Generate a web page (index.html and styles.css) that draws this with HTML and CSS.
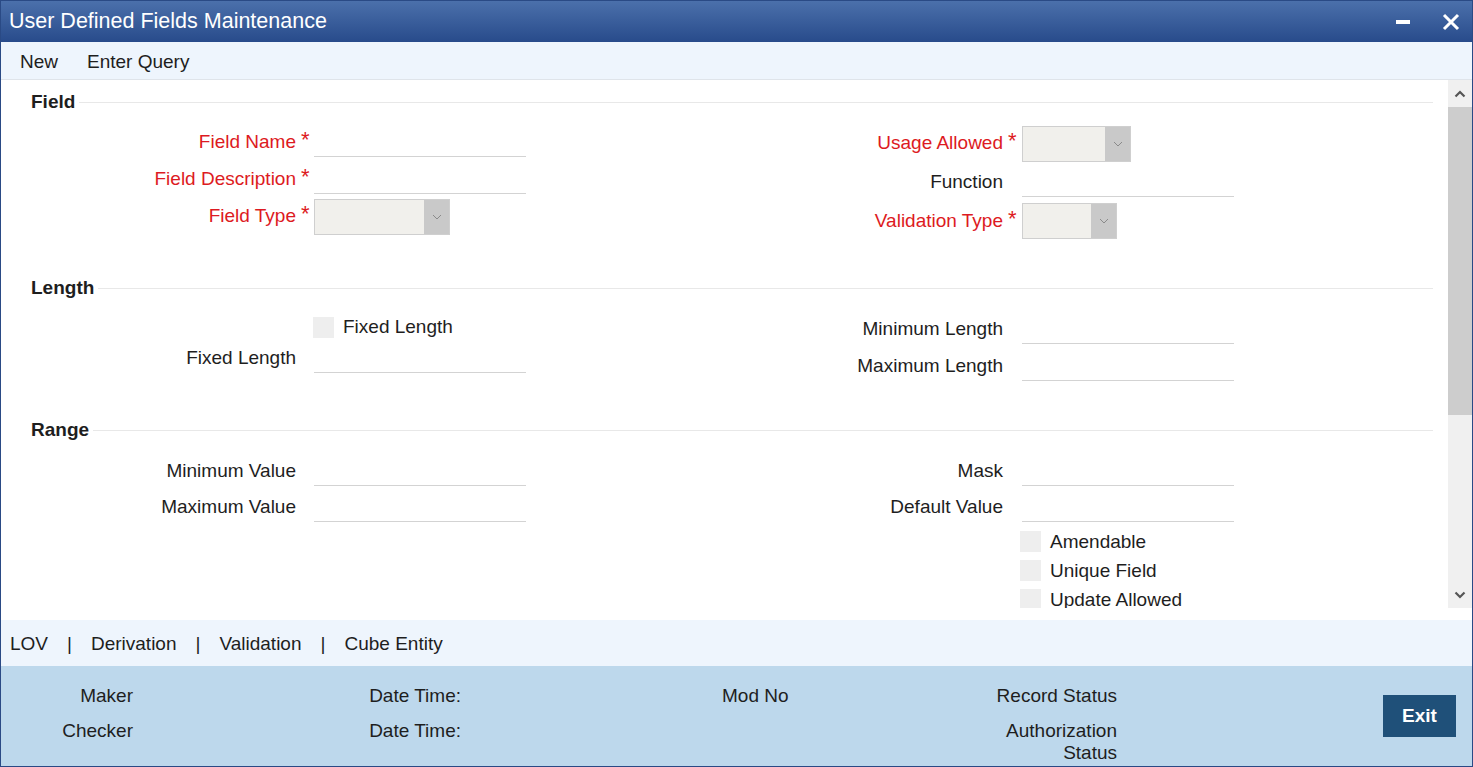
FILE: index.html
```html
<!DOCTYPE html>
<html lang="en">
<head>
	<meta charset="UTF-8">
	<title>User Defined Fields Maintenance</title>
	<link rel="stylesheet" href="styles.css">
</head>
<body>
	<div class="window">
		<div class="titlebar">
			<span class="title">User Defined Fields Maintenance</span>
			<span class="win-btns">
				<span class="minimize"></span>
				<svg class="close" width="18" height="18" viewBox="0 0 18 18"><path d="M2 2L16 16M16 2L2 16" stroke="#fff" stroke-width="3" fill="none"/></svg>
			</span>
		</div>
		<div class="toolbar">
			<a href="javascript:;">New</a>
			<a href="javascript:;">Enter Query</a>
		</div>
		<div class="main">
			<div class="content">
				<!-- Field -->
				<div class="section sec-field">
					<div class="sec-head"><span>Field</span></div>
					<div class="sec-body">
						<div class="col col-left">
							<div class="row"><label class="lbl req">Field Name</label><span class="star">*</span><input type="text" class="txt"></div>
							<div class="row"><label class="lbl req">Field Description</label><span class="star">*</span><input type="text" class="txt"></div>
							<div class="row"><label class="lbl req">Field Type</label><span class="star">*</span>
								<div class="select sel-type"><span class="sel-val"></span><span class="sel-arrow"><svg width="10" height="6" viewBox="0 0 10 6"><path d="M1 1L5 5L9 1" stroke="#8a8a8a" fill="none"/></svg></span></div>
							</div>
						</div>
						<div class="col col-right">
							<div class="row row-usage"><label class="lbl req">Usage Allowed</label><span class="star">*</span>
								<div class="select sel-usage"><span class="sel-val"></span><span class="sel-arrow"><svg width="10" height="6" viewBox="0 0 10 6"><path d="M1 1L5 5L9 1" stroke="#8a8a8a" fill="none"/></svg></span></div>
							</div>
							<div class="row row-func"><label class="lbl">Function</label><span class="star"></span><input type="text" class="txt"></div>
							<div class="row row-valid"><label class="lbl req">Validation Type</label><span class="star">*</span>
								<div class="select sel-valid"><span class="sel-val"></span><span class="sel-arrow"><svg width="10" height="6" viewBox="0 0 10 6"><path d="M1 1L5 5L9 1" stroke="#8a8a8a" fill="none"/></svg></span></div>
							</div>
						</div>
					</div>
				</div>
				<!-- Length -->
				<div class="section sec-length">
					<div class="sec-head"><span>Length</span></div>
					<div class="sec-body">
						<div class="col col-left">
							<div class="row row-check"><span class="lbl"></span><span class="star"></span><span class="check"></span><span class="check-text">Fixed Length</span></div>
							<div class="row row-short"><label class="lbl">Fixed Length</label><span class="star"></span><input type="text" class="txt"></div>
						</div>
						<div class="col col-right">
							<div class="row"><label class="lbl">Minimum Length</label><span class="star"></span><input type="text" class="txt"></div>
							<div class="row"><label class="lbl">Maximum Length</label><span class="star"></span><input type="text" class="txt"></div>
						</div>
					</div>
				</div>
				<!-- Range -->
				<div class="section sec-range">
					<div class="sec-head"><span>Range</span></div>
					<div class="sec-body">
						<div class="col col-left">
							<div class="row"><label class="lbl">Minimum Value</label><span class="star"></span><input type="text" class="txt"></div>
							<div class="row"><label class="lbl">Maximum Value</label><span class="star"></span><input type="text" class="txt"></div>
						</div>
						<div class="col col-right">
							<div class="row"><label class="lbl">Mask</label><span class="star"></span><input type="text" class="txt"></div>
							<div class="row"><label class="lbl">Default Value</label><span class="star"></span><input type="text" class="txt"></div>
							<div class="checks">
								<div class="row row-check"><span class="lbl"></span><span class="star"></span><span class="check"></span><span class="check-text">Amendable</span></div>
								<div class="row row-check"><span class="lbl"></span><span class="star"></span><span class="check"></span><span class="check-text">Unique Field</span></div>
								<div class="row row-check"><span class="lbl"></span><span class="star"></span><span class="check"></span><span class="check-text">Update Allowed</span></div>
							</div>
						</div>
					</div>
				</div>
			</div>
			<div class="scrollbar">
				<span class="sb-btn"><svg width="12" height="8" viewBox="0 0 12 8"><path d="M1.5 6.5L6 2L10.5 6.5" stroke="#555" stroke-width="2.2" fill="none"/></svg></span>
				<span class="sb-thumb"></span>
				<span class="sb-track"></span>
				<span class="sb-btn"><svg width="12" height="8" viewBox="0 0 12 8"><path d="M1.5 1.5L6 6L10.5 1.5" stroke="#555" stroke-width="2.2" fill="none"/></svg></span>
			</div>
		</div>
		<div class="tabs">
			<a href="javascript:;">LOV</a><span class="sep">|</span><a href="javascript:;">Derivation</a><span class="sep">|</span><a href="javascript:;">Validation</a><span class="sep">|</span><a href="javascript:;">Cube Entity</a>
		</div>
		<div class="footer">
			<div class="fcol fcol-maker"><span>Maker</span><span>Checker</span></div>
			<div class="fcol fcol-date"><span>Date Time:</span><span>Date Time:</span></div>
			<div class="fcol fcol-mod"><span>Mod No</span></div>
			<div class="fcol fcol-status"><span>Record Status</span><span class="auth">Authorization Status</span></div>
			<a href="javascript:;" class="exit">Exit</a>
		</div>
	</div>
</body>
</html>
```

FILE: styles.css
```css
body, div, p, span, label, input, a{ margin: 0; padding: 0}
body{font-family: "Liberation Sans", Arial, sans-serif;font-size: 19px;color: #1e1e1e;background: #fff;}
a{text-decoration: none;color: #1e1e1e;}
.window{width: 1473px;height: 767px;border: 1px solid #2a4a85;box-sizing: border-box;display: flex;flex-direction: column;overflow: hidden;}

/* title bar */
.titlebar{height: 41px;flex: none;display: flex;align-items: center;justify-content: space-between;padding: 0 12px 0 8px;background: linear-gradient(#4b70ab, #284b8b);color: #fff;}
.title{font-size: 21.5px;line-height: 41px;}
.win-btns{display: flex;align-items: center;gap: 32px;}
.minimize{width: 14px;height: 4px;background: #fff;display: block;margin-top: 1px;}
.close{display: block;}

.toolbar{flex: none;display: flex;align-items: center;gap: 29px;padding: 2px 0 0 19px;box-sizing: border-box;height: 38px;background: #eef5fd;border-bottom: 1px solid #dfe4ea;}

/* main form */
.main{height: 540px;flex: none;display: flex;padding-bottom: 12px;box-sizing: border-box;background: #fff;}
.content{flex: 1;overflow: hidden;padding-top: 11px;}
.sec-head{height: 22px;display: flex;align-items: center;padding: 0 15px 0 30px;}
.sec-head span{font-weight: bold;}
.sec-head:after{content: "";flex: 1;height: 1px;background: #e8e8e8;margin-left: 4px;}
.sec-body{display: flex;}
.col-left{width: 706px;}
.row{display: flex;align-items: center;height: 37px;}
.lbl{width: 295px;text-align: right;flex: none;}
.col-right .lbl{width: 296px;}
.lbl.req{color: #dd1a22;}
.star{width: 18px;flex: none;box-sizing: border-box;padding-left: 5px;color: #dd1a22;font-size: 22px;line-height: 22px;margin-top: -3px;}
.col-right .star{width: 19px;}
.txt{width: 212px;height: 30px;border: 0;border-bottom: 1px solid #d3d3d3;box-sizing: border-box;outline: none;background: transparent;font: inherit;}
.select{height: 36px;display: flex;border: 1px solid #cfcfcf;box-sizing: border-box;background: #f1f0ec;}
.sel-val{flex: 1;}
.sel-arrow{width: 25px;background: #c9c9c9;display: flex;align-items: center;justify-content: center;}
.sel-type{width: 136px;margin-top: 3px;}
.sel-usage{width: 109px;margin-top: 3px;}
.sel-valid{width: 95px;}
.check{width: 21px;height: 21px;background: #eeeeee;flex: none;margin-left: -1px;}
.check-text{margin-left: 9px;}

.sec-field .sec-body{padding-top: 10px;height: 116px;margin-bottom: 38px;}
.sec-field .col-right{padding-top: 1px;}
.sec-field .row-usage{height: 37px;}
.sec-field .row-func{height: 41px;}
.sec-field .row-valid{height: 37px;}
.sec-length .sec-body{padding-top: 11px;height: 74px;margin-bottom: 35px;}
.sec-length .col-left{padding-top: 3px;}
.sec-length .row-check{height: 28px;}
.sec-length .row-short{height: 33px;}
.sec-range .sec-body{padding-top: 12px;}
.sec-range .row{height: 36px;}
.sec-range .checks{padding-top: 2px;}
.sec-range .row-check{height: 29px;}
.col-right .check{margin-left: -2px;}

/* scrollbar */
.scrollbar{width: 24px;flex: none;display: flex;flex-direction: column;background: #f0f0f0;}
.sb-btn{height: 27px;flex: none;display: flex;align-items: center;justify-content: center;}
.sb-thumb{height: 308px;flex: none;background: #cdcdcd;}
.sb-track{flex: 1;}

/* bottom tabs */
.tabs{height: 46px;flex: none;display: flex;align-items: center;padding: 1px 0 0 9px;box-sizing: border-box;background: #eef5fd;}
.sep{margin: 0 19px;}

/* footer */
.footer{flex: 1;display: flex;align-items: flex-start;padding-top: 19px;background: #bdd8ec;box-sizing: border-box;}
.fcol{display: flex;flex-direction: column;gap: 13px;line-height: 22px;}
.fcol-maker{width: 132px;text-align: right;}
.fcol-date{width: 328px;text-align: right;}
.fcol-mod{width: 150px;margin-left: 261px;}
.fcol-status{width: 245px;align-items: flex-end;text-align: right;}
.auth{width: 115px;}
.exit{margin-left: 266px;margin-top: 10px;width: 73px;height: 42px;line-height: 42px;text-align: center;background: #1f5079;color: #fff;font-weight: bold;}
```
